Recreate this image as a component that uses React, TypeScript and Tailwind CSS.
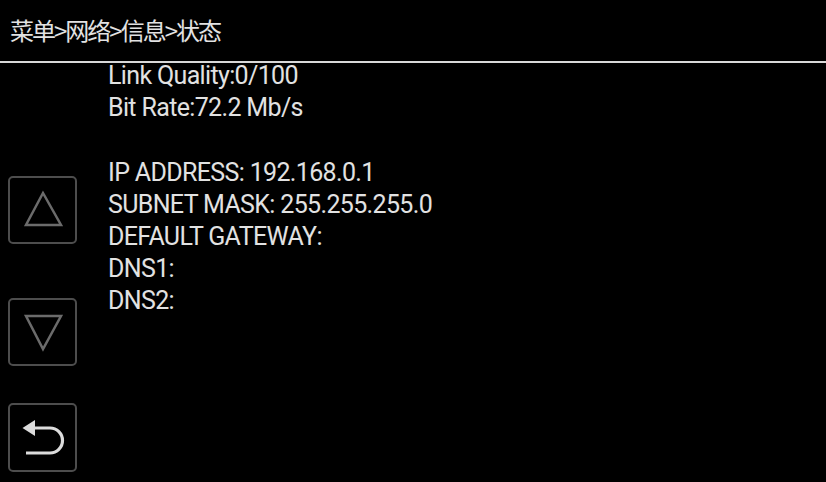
import React from "react";

const lines = [
  "Link Quality:0/100",
  "Bit Rate:72.2 Mb/s",
  "",
  "IP ADDRESS: 192.168.0.1",
  "SUBNET MASK: 255.255.255.0",
  "DEFAULT GATEWAY:",
  "DNS1:",
  "DNS2:",
];

function NavButton({ children, className = "" }: { children: React.ReactNode; className?: string }) {
  return (
    <div className={`w-[69px] rounded-[5px] border-2 border-[#4d4d4d] flex items-center justify-center ${className}`}>
      {children}
    </div>
  );
}

export default function App() {
  return (
    <div className="w-[826px] h-[482px] bg-black overflow-hidden text-[#e2e2e2] flex flex-col">
      {/* Header */}
      <div className="h-[63px] border-b-2 border-[#d8d8d8] flex items-center pl-[10px] pb-[1px]">
        <span className="text-[24px] tracking-[-2px] font-['Noto_Sans_CJK_SC',sans-serif]">
          菜单&gt;网络&gt;信息&gt;状态
        </span>
      </div>

      {/* Body */}
      <div className="flex flex-1">
        <div className="w-[108px] pl-[8px] flex flex-col">
          <NavButton className="h-[68px] mt-[113px]">
            <svg width="65" height="64" viewBox="0 0 65 64" className="-mt-[2px]">
              <polygon points="33,16 16,48 51,48" fill="none" stroke="#6b6b6b" strokeWidth="2.5" strokeLinejoin="miter" />
            </svg>
          </NavButton>
          <NavButton className="h-[68px] mt-[54px]">
            <svg width="65" height="64" viewBox="0 0 65 64">
              <polygon points="16,16 51,16 33,49" fill="none" stroke="#6b6b6b" strokeWidth="2.5" strokeLinejoin="miter" />
            </svg>
          </NavButton>
          <NavButton className="h-[69px] mt-[37px]">
            <svg width="65" height="65" viewBox="0 0 65 65">
              <polygon points="12.5,23 25,15 25,31" fill="#dcdcdc" />
              <path d="M24 23 H40 A12.5 12.5 0 0 1 40 48 H16" fill="none" stroke="#dcdcdc" strokeWidth="3.2" />
            </svg>
          </NavButton>
        </div>
        <div className="-mt-[3px] flex flex-col font-['Roboto',sans-serif] text-[25px] tracking-[-0.65px] leading-[32.2px]">
          {lines.map((l, i) => (
            <div key={i} className="h-[32.2px] whitespace-pre">
              {l || " "}
            </div>
          ))}
        </div>
      </div>
    </div>
  );
}
